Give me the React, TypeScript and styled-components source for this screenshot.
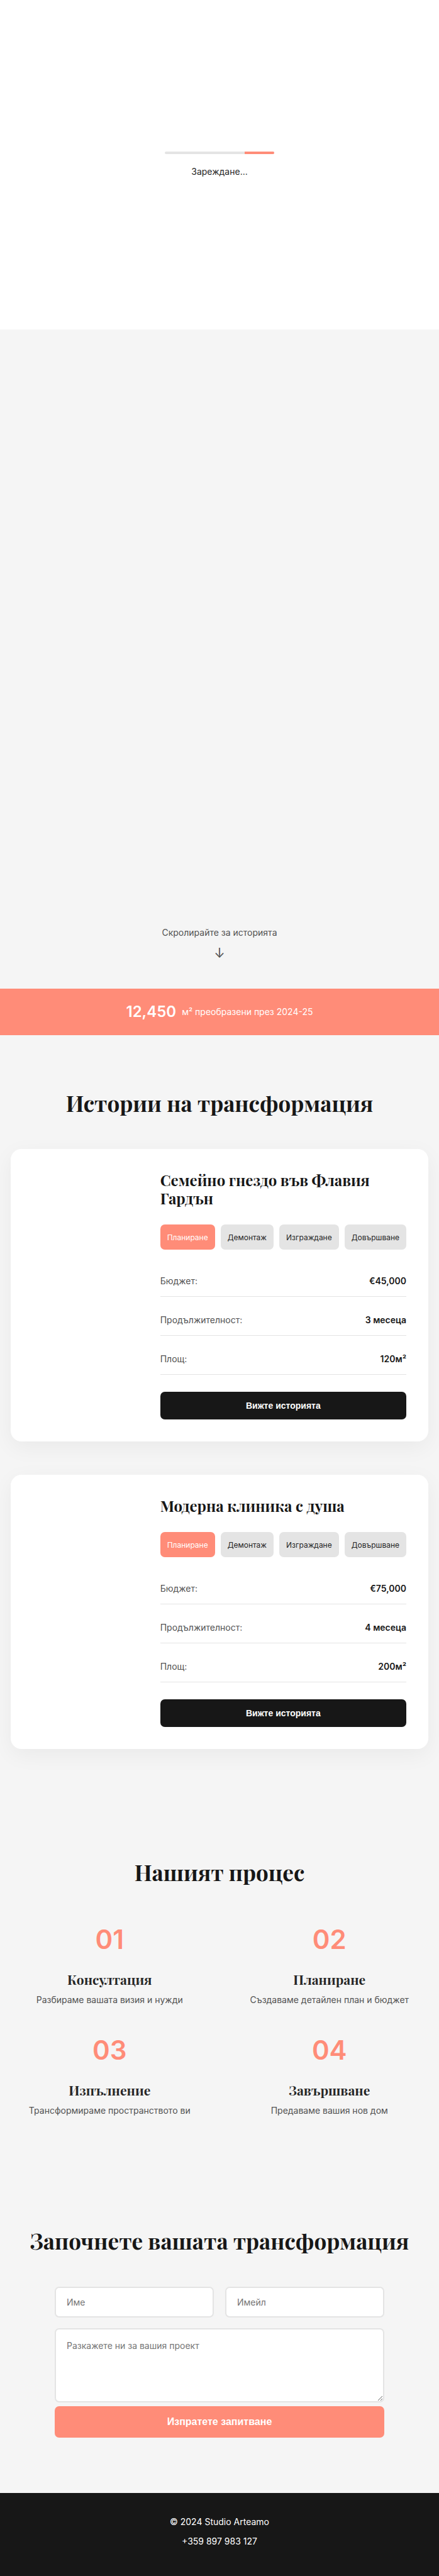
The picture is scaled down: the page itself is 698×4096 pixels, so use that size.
import React, { useState } from "react";
import styled, { createGlobalStyle } from "styled-components";

const coral = "#ff8c78";
const ink = "#171717";
const text = "#262626";
const muted = "#525252";
const line = "#e4e4e4";
const paper = "#f5f5f5";
const display = '"Playfair Display", "Liberation Serif", serif';
const body = 'Inter, "Liberation Sans", sans-serif';

const GlobalStyle = createGlobalStyle`
  * { box-sizing: border-box; margin: 0; padding: 0; }
  body {
    background: ${paper};
    color: ${text};
    font-family: ${body};
    font-size: 14px;
    line-height: 22px;
  }
`;

const Loader = styled.div`
  min-height: 524px;
  display: flex;
  flex-direction: column;
  align-items: center;
  justify-content: center;
  gap: 17px;
  background: #fff;
`;

const LoaderTrack = styled.div`
  display: flex;
  justify-content: flex-end;
  width: 174px;
  height: 4px;
  border-radius: 2px;
  background: ${line};
  overflow: hidden;
`;

const LoaderFill = styled.div`
  width: 27%;
  background: ${coral};
`;

const Hero = styled.header`
  min-height: 1048px;
  display: flex;
  flex-direction: column;
  align-items: center;
  justify-content: flex-end;
  gap: 5px;
  padding-bottom: 39px;
  color: ${muted};
`;

const Arrow = styled.span`
  font-size: 21px;
  line-height: 34px;
`;

const StatBand = styled.section`
  display: flex;
  align-items: center;
  justify-content: center;
  gap: 9px;
  padding: 17px;
  background: ${coral};
  color: #fff;
`;

const StatNumber = styled.strong`
  font-size: 24px;
  font-weight: 600;
  line-height: 40px;
`;

const Section = styled.section`
  padding: 87px 17px 88px;
`;

const SectionTitle = styled.h2`
  margin-bottom: 52px;
  font-family: ${display};
  font-size: 35px;
  font-weight: 700;
  line-height: 42px;
  text-align: center;
  color: ${ink};
`;

const Stories = styled.div`
  display: flex;
  flex-direction: column;
  gap: 53px;
`;

const Card = styled.article`
  display: grid;
  grid-template-columns: minmax(0, 29fr) minmax(0, 66fr);
  border-radius: 17px;
  background: #fff;
  box-shadow: 0 9px 35px rgba(0, 0, 0, 0.05);
  overflow: hidden;
`;

const CardMedia = styled.div``;

const CardContent = styled.div`
  padding: 35px;
`;

const CardTitle = styled.h3`
  margin-bottom: 27px;
  font-family: ${display};
  font-size: 24px;
  font-weight: 700;
  line-height: 29px;
  color: ${ink};
`;

const Tabs = styled.div`
  display: flex;
  gap: 9px;
  margin-bottom: 26px;
`;

const Tab = styled.button<{ $active: boolean }>`
  flex: 1 1 auto;
  height: 40px;
  border: 0;
  border-radius: 7px;
  background: ${(p) => (p.$active ? coral : line)};
  color: ${(p) => (p.$active ? "#fff" : text)};
  font-family: ${body};
  font-size: 12px;
  white-space: nowrap;
  cursor: pointer;
`;

const Facts = styled.dl`
  display: flex;
  flex-direction: column;
  gap: 13px;
  margin-bottom: 27px;
`;

const Fact = styled.div`
  display: flex;
  justify-content: space-between;
  padding: 13px 0;
  border-bottom: 1px solid ${line};
`;

const FactName = styled.dt`
  color: ${muted};
`;

const FactValue = styled.dd`
  font-weight: 600;
  color: ${ink};
`;

const Action = styled.button<{ $primary?: boolean }>`
  display: block;
  width: 100%;
  height: ${(p) => (p.$primary ? 50 : 44)}px;
  border: 0;
  border-radius: 7px;
  background: ${(p) => (p.$primary ? coral : ink)};
  color: #fff;
  font-family: "Liberation Sans", sans-serif;
  font-size: ${(p) => (p.$primary ? 16 : 14)}px;
  font-weight: 600;
  cursor: pointer;
`;

const Steps = styled.div`
  display: grid;
  grid-template-columns: 1fr 1fr;
  gap: 35px;
`;

const Step = styled.div`
  text-align: center;
`;

const StepNumber = styled.div`
  margin-bottom: 18px;
  font-size: 42px;
  font-weight: 600;
  line-height: 67px;
  color: ${coral};
`;

const StepTitle = styled.h3`
  margin-bottom: 9px;
  font-family: ${display};
  font-size: 21px;
  font-weight: 700;
  line-height: 25px;
`;

const StepText = styled.p`
  color: ${muted};
`;

const Form = styled.form`
  max-width: 524px;
  margin: 0 auto;
`;

const FormRow = styled.div`
  display: grid;
  grid-template-columns: 1fr 1fr;
  gap: 18px;
  margin-bottom: 17px;
`;

const Input = styled.input`
  width: 100%;
  height: 49px;
  padding: 0 17px;
  border: 2px solid ${line};
  border-radius: 7px;
  background: #fff;
  font-family: ${body};
  font-size: 14px;
  &::placeholder { color: #757575; }
`;

const TextArea = styled.textarea`
  display: block;
  width: 100%;
  height: 118px;
  margin-bottom: 6px;
  padding: 17px;
  border: 2px solid ${line};
  border-radius: 7px;
  background: #fff;
  font-family: ${body};
  font-size: 14px;
  resize: vertical;
  &::placeholder { color: #757575; }
`;

const Footer = styled.footer`
  display: flex;
  flex-direction: column;
  align-items: center;
  gap: 9px;
  padding: 35px 17px 44px;
  background: ${ink};
  color: #fff;
`;

const phases = ["Планиране", "Демонтаж", "Изграждане", "Довършване"];

const stories = [
  {
    title: "Семейно гнездо във Флавия Гардън",
    facts: [["Бюджет:", "€45,000"], ["Продължителност:", "3 месеца"], ["Площ:", "120м²"]],
  },
  {
    title: "Модерна клиника с душа",
    facts: [["Бюджет:", "€75,000"], ["Продължителност:", "4 месеца"], ["Площ:", "200м²"]],
  },
];

const steps = [
  ["01", "Консултация", "Разбираме вашата визия и нужди"],
  ["02", "Планиране", "Създаваме детайлен план и бюджет"],
  ["03", "Изпълнение", "Трансформираме пространството ви"],
  ["04", "Завършване", "Предаваме вашия нов дом"],
];

function StoryCard({ title, facts }: { title: string; facts: string[][] }) {
  const [phase, setPhase] = useState(0);
  return (
    <Card>
      <CardMedia />
      <CardContent>
        <CardTitle>{title}</CardTitle>
        <Tabs>
          {phases.map((name, i) => (
            <Tab key={name} type="button" $active={i === phase} aria-pressed={i === phase} onClick={() => setPhase(i)}>
              {name}
            </Tab>
          ))}
        </Tabs>
        <Facts>
          {facts.map(([name, value]) => (
            <Fact key={name}>
              <FactName>{name}</FactName>
              <FactValue>{value}</FactValue>
            </Fact>
          ))}
        </Facts>
        <Action type="button">Вижте историята</Action>
      </CardContent>
    </Card>
  );
}

export default function App() {
  return (
    <>
      <GlobalStyle />
      <Loader>
        <LoaderTrack>
          <LoaderFill />
        </LoaderTrack>
        <p>Зареждане...</p>
      </Loader>
      <Hero>
        <p>Скролирайте за историята</p>
        <Arrow>↓</Arrow>
      </Hero>
      <StatBand>
        <StatNumber>12,450</StatNumber>
        <span>м² преобразени през 2024-25</span>
      </StatBand>
      <main>
        <Section>
          <SectionTitle>Истории на трансформация</SectionTitle>
          <Stories>
            {stories.map((story) => (
              <StoryCard key={story.title} {...story} />
            ))}
          </Stories>
        </Section>
        <Section>
          <SectionTitle>Нашият процес</SectionTitle>
          <Steps>
            {steps.map(([number, title, description]) => (
              <Step key={number}>
                <StepNumber>{number}</StepNumber>
                <StepTitle>{title}</StepTitle>
                <StepText>{description}</StepText>
              </Step>
            ))}
          </Steps>
        </Section>
        <Section>
          <SectionTitle>Започнете вашата трансформация</SectionTitle>
          <Form onSubmit={(e) => e.preventDefault()}>
            <FormRow>
              <Input type="text" aria-label="Име" placeholder="Име" />
              <Input type="email" aria-label="Имейл" placeholder="Имейл" />
            </FormRow>
            <TextArea aria-label="Разкажете ни за вашия проект" placeholder="Разкажете ни за вашия проект" />
            <Action type="submit" $primary>Изпратете запитване</Action>
          </Form>
        </Section>
      </main>
      <Footer>
        <p>© 2024 Studio Arteamo</p>
        <p>+359 897 983 127</p>
      </Footer>
    </>
  );
}
